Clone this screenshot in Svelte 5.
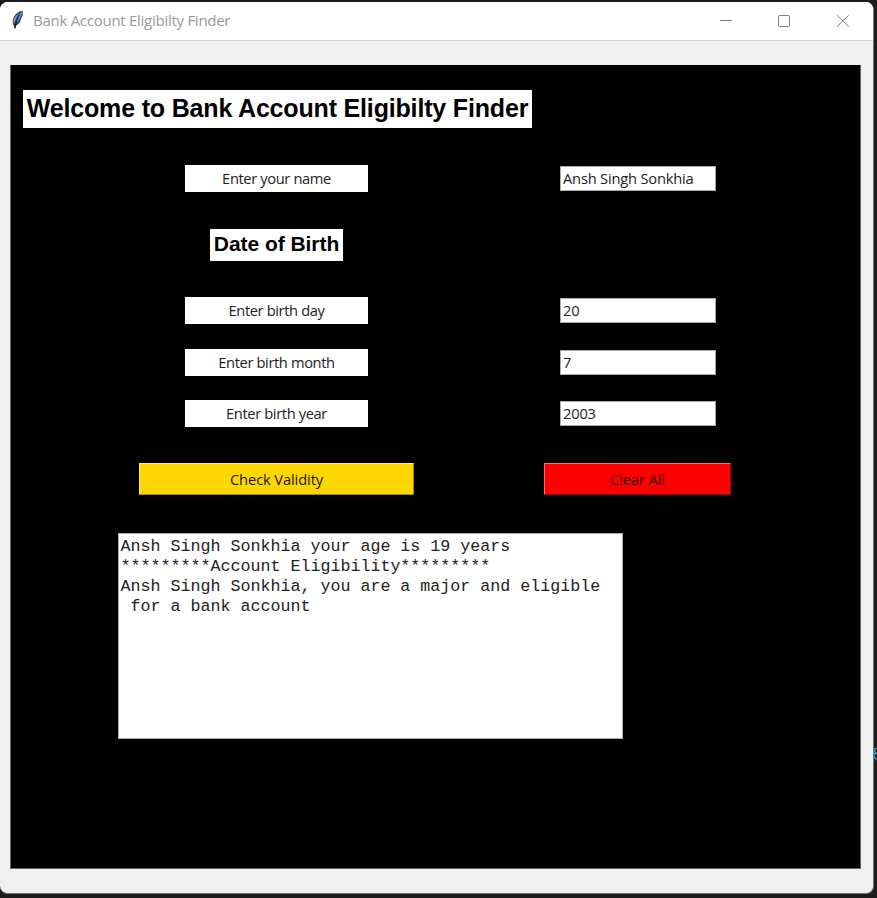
<script>
  let name = $state('Ansh Singh Sonkhia');
  let day = $state('20');
  let month = $state('7');
  let year = $state('2003');
  let output = $state(
    'Ansh Singh Sonkhia your age is 19 years\n*********Account Eligibility*********\nAnsh Singh Sonkhia, you are a major and eligible\n for a bank account'
  );

  function clearAll() {
    name = day = month = year = output = '';
  }
</script>

<div class="desktop">
  <div class="window">
    <header>
      <svg class="feather" width="13" height="20" viewBox="0 0 13 20">
        <path d="M11.600.7C7.500 1.200 4 4 2.300 8.600 1.400 11 1.500 13.500 2.800 15.600L4 19.500 5 15.700C8 14 9.700 11.500 10.100 8.600L11.700 5.500Z" fill="#27323f" />
        <path d="M11 1.300C8.500 3 6.800 5.500 5.500 9.500L5 13.800C8.300 11.500 9.500 8 10.800 4.500Z" fill="#4f8ddd" />
        <path d="M8.500 2.400C4.600 5.300 2.700 8.500 2.400 11.600L3.500 14.300C4.200 9.500 5.800 6 8.500 2.400Z" fill="#91a6ba" />
        <path d="M8.300 4.800C6.500 8 5 12 4 18" fill="none" stroke="#0a111c" stroke-width=".9" />
      </svg>
      <span class="title">Bank Account Eligibilty Finder</span>
      <div class="controls">
        <svg width="13" height="13" viewBox="0 0 13 13"><path d="M0 6.500H12" /></svg>
        <svg width="13" height="13" viewBox="0 0 13 13"><rect x=".5" y="1.500" width="11" height="11" rx="1.200" /></svg>
        <svg width="13" height="13" viewBox="0 0 13 13"><path d="M1 1.200 12.700 12.700M12.700 1.200 1 12.700" /></svg>
      </div>
    </header>
    <main>
      <div class="row heading"><h1>Welcome to Bank Account Eligibilty Finder</h1></div>
      <div class="row name">
        <div class="left"><label for="name">Enter your name</label></div>
        <div class="right"><input id="name" bind:value={name} /></div>
      </div>
      <div class="row dob"><div class="left"><h2>Date of Birth</h2></div></div>
      <div class="row day">
        <div class="left"><label for="day">Enter birth day</label></div>
        <div class="right"><input id="day" bind:value={day} /></div>
      </div>
      <div class="row month">
        <div class="left"><label for="month">Enter birth month</label></div>
        <div class="right"><input id="month" bind:value={month} /></div>
      </div>
      <div class="row year">
        <div class="left"><label for="year">Enter birth year</label></div>
        <div class="right"><input id="year" bind:value={year} /></div>
      </div>
      <div class="row actions">
        <div class="left"><button class="check">Check Validity</button></div>
        <div class="right"><button class="clear" onclick={clearAll}>Clear All</button></div>
      </div>
      <div class="output">{output}</div>
    </main>
  </div>
  <svg class="edge" width="4" height="15" viewBox="0 0 4 15">
    <path d="M4 1.500H2.500L1 3.500 2.500 6H4M4 6.500H2L.8 8.500 2 11 4 13" fill="none" stroke="#1a9bc5" stroke-width="1.500" />
  </svg>
</div>

<style>
  :global(body) { margin: 0; overflow: hidden; }
  * { box-sizing: border-box; }
  .desktop {
    position: relative;
    width: 877px;
    height: 898px;
    padding-top: 2px;
    background: #1c1c1c;
    font-family: "Open Sans", "Noto Sans", sans-serif;
  }
  .window {
    width: 874px;
    height: 892px;
    background: #f0f0f0;
    border-right: 1px solid #777;
    border-bottom: 1px solid #777;
    border-radius: 8px;
    overflow: hidden;
  }
  header {
    display: flex;
    align-items: center;
    height: 39px;
    padding: 0 24px 2px 11px;
    background: #fff;
    border-bottom: 1px solid #d4d4d4;
  }
  .feather { margin-top: -1px; }
  .title {
    margin-left: 9px;
    color: #999;
    font-size: 15px;
    letter-spacing: -0.27px;
    white-space: nowrap;
  }
  .controls {
    display: flex;
    gap: 45px;
    margin-left: auto;
    fill: none;
    stroke: #808080;
    stroke-width: 1;
  }
  main {
    width: 851px;
    height: 804px;
    margin: 24px 0 0 10px;
    padding: 25px 0 0 12px;
    background: #000;
    border: 1px solid #666;
    border-top: 0;
  }
  .row { display: flex; align-items: center; }
  .left { display: flex; justify-content: center; width: 507px; }
  .right { display: flex; justify-content: center; width: 216px; }
  h1, h2 {
    margin: 0;
    background: #fff;
    color: #000;
    font-family: "Liberation Sans", Arial, sans-serif;
    font-weight: 700;
    text-align: center;
    white-space: nowrap;
  }
  h1 { width: 509px; height: 38px; line-height: 37px; font-size: 25px; letter-spacing: -0.17px; }
  h2 { width: 133px; height: 32px; line-height: 30px; font-size: 21px; letter-spacing: -0.05px; }
  label {
    width: 183px;
    height: 27px;
    background: #fff;
    color: #222;
    font-size: 14.700px;
    line-height: 27px;
    letter-spacing: -0.38px;
    text-align: center;
  }
  input {
    width: 156px;
    height: 25px;
    padding: 0 2px 2px;
    border: 1px solid #aaa;
    border-radius: 0;
    background: #fff;
    color: #222;
    font: 14.700px "Open Sans", "Noto Sans", sans-serif;
    letter-spacing: -0.2px;
    outline: 0;
  }
  .heading { height: 38px; }
  .name { margin-top: 37px; }
  .dob { margin-top: 37px; }
  .day { margin-top: 36px; }
  .month { margin-top: 25px; }
  .year { margin-top: 24px; }
  .actions { margin-top: 36px; }
  button {
    height: 32px;
    padding: 0;
    border: 1px solid;
    border-radius: 0;
    color: #1c1500;
    font: 14.700px "Open Sans", "Noto Sans", sans-serif;
    letter-spacing: -0.12px;
  }
  .check { width: 275px; background: #ffd700; border-color: #fff06a #a58b00 #a58b00 #fff06a; }
  .clear { width: 187px; margin-right: 1px; background: #f00; border-color: #ff6a6a #a00 #a00 #ff6a6a; color: #300; }
  .output {
    width: 505px;
    height: 206px;
    margin: 38px 0 0 95px;
    padding: 3px 1.500px;
    border: 1px solid #aaa;
    background: #fff;
    color: #222;
    font: 16.667px/20px "Liberation Mono", "Courier New", monospace;
    white-space: pre;
  }
  .edge { position: absolute; right: 0; top: 747px; }
</style>
